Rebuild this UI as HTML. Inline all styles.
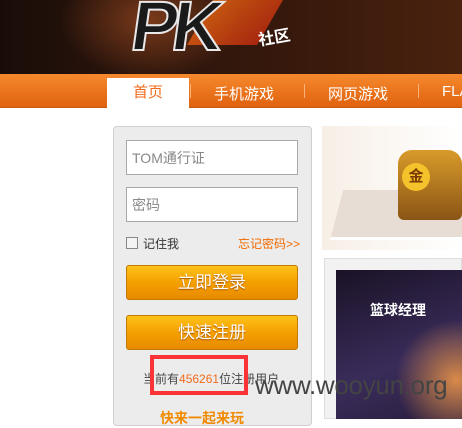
<!DOCTYPE html>
<html><head><meta charset="utf-8"><style>
*{margin:0;padding:0;box-sizing:border-box}
body{width:462px;height:419px;overflow:hidden;background:#fff;font-family:"Liberation Sans","Noto Sans CJK SC",sans-serif;position:relative}
.hd{position:absolute;left:0;top:0;width:462px;height:74px;background:radial-gradient(ellipse 90px 60px at 150px 20px,#7a3a1a,transparent),linear-gradient(90deg,#1a0d08 0%,#2a140c 30%,#3a1a0c 70%,#4a220e 100%)}
.logo{position:absolute;left:132px;top:-14px;font:bold 70px "Liberation Sans",sans-serif;color:#1a1a1a;-webkit-text-stroke:2px #e8e8e8;letter-spacing:-6px;transform:skew(-8deg)}
.she{position:absolute;left:258px;top:24px;color:#fff;font-weight:bold;font-size:16px;transform:rotate(-10deg)}
.flame{position:absolute;left:200px;top:0px;width:70px;height:45px;background:linear-gradient(120deg,#e86a10,#c52b10);transform:skew(-30deg);opacity:.8}
.nav{position:absolute;left:0;top:74px;width:462px;height:34px;background:linear-gradient(#f5892d,#e0620f);border-bottom:1px solid #c85a10}
.nav span{position:absolute;top:9px;color:#fff;font-size:15px}
.tab{position:absolute;left:107px;top:78px;width:82px;height:31px;background:#fff;color:#f26a1a;font-size:15px;text-align:center;line-height:30px}
.sep{position:absolute;top:84px;width:1px;height:14px;background:#f9b27a}
.panel{position:absolute;left:113px;top:126px;width:199px;height:300px;background:#ececec;border:1px solid #cfcfcf;border-radius:4px}
.inp{position:absolute;left:126px;width:172px;height:35px;background:#fff;border:1px solid #a8a8a8;font-size:14px;color:#888;padding:8px 5px;line-height:18px}
.cb{position:absolute;left:126px;top:237px;width:12px;height:12px;border:1px solid #888;background:#f4f4f4}
.btn{position:absolute;left:126px;width:172px;height:35px;border:1px solid #c27a00;border-radius:3px;background:linear-gradient(#ffc21a,#f4a000 50%,#e88a00);color:#fff;font-size:17px;text-align:center;line-height:33px;text-shadow:0 1px 1px #a05000}
.red{position:absolute;left:150px;top:355px;width:98px;height:40px;border:4px solid #fb3336}
.img1{position:absolute;left:322px;top:126px;width:140px;height:124px;background:linear-gradient(90deg,#f7efe6,#fff)}
.plat{position:absolute;left:330px;top:190px;width:132px;height:50px;background:#e8ddd5;border-bottom:3px solid #fff;clip-path:polygon(10% 0,100% 0,100% 100%,0 100%)}
.chest{position:absolute;left:398px;top:150px;width:64px;height:70px;background:linear-gradient(#d99a2a,#8a5516);border-radius:14px 14px 6px 6px}
.coin{position:absolute;left:402px;top:163px;width:28px;height:28px;border-radius:50%;background:#f4c22a;color:#7a3a00;font-size:15px;font-weight:bold;text-align:center;line-height:28px}
.box2{position:absolute;left:324px;top:258px;width:138px;height:161px;background:#f2f2f2;border:1px solid #ddd}
.img2{position:absolute;left:336px;top:270px;width:126px;height:149px;background:radial-gradient(ellipse 60px 60px at 120px 110px,#d98a4a,transparent),linear-gradient(160deg,#1a1226,#3a2c5a 60%,#2a1e3e)}
</style></head><body>
<div class="hd"><div class="flame"></div><div class="logo">PK</div><div class="she">社区</div></div>
<div class="nav"><span style="left:214px">手机游戏</span><span style="left:328px">网页游戏</span><span style="left:442px">FLA</span></div>
<div class="sep" style="left:190px"></div><div class="sep" style="left:304px"></div><div class="sep" style="left:418px"></div>
<div class="tab">首页</div>
<div class="panel"></div>
<div class="inp" style="top:140px">TOM通行证</div>
<div class="inp" style="top:187px">密码</div>
<div class="cb"></div>
<div style="position:absolute;left:143px;top:235px;font-size:12px;color:#333">记住我</div>
<div style="position:absolute;left:238px;top:235px;font-size:12px;color:#f26a00">忘记密码&gt;&gt;</div>
<div class="btn" style="top:265px">立即登录</div>
<div class="btn" style="top:315px">快速注册</div>
<div style="position:absolute;left:143px;top:370px;font-size:12px;color:#444">当前有<span style="color:#f26a1a">456261</span>位注册用户</div>
<div style="position:absolute;left:160px;top:408px;font-size:14px;color:#f08a00;font-weight:bold">快来一起来玩</div>
<div class="red"></div>
<div class="img1"></div><div class="plat"></div><div class="chest"></div><div class="coin">金</div>
<div class="box2"></div><div class="img2"></div>
<div style="position:absolute;left:370px;top:300px;color:#fff;font-weight:bold;font-size:14px">篮球经理</div>
<div style="position:absolute;left:255px;top:370px;font-size:26px;color:#444;letter-spacing:-0.3px">www.wooyun.org</div>
</body></html>
